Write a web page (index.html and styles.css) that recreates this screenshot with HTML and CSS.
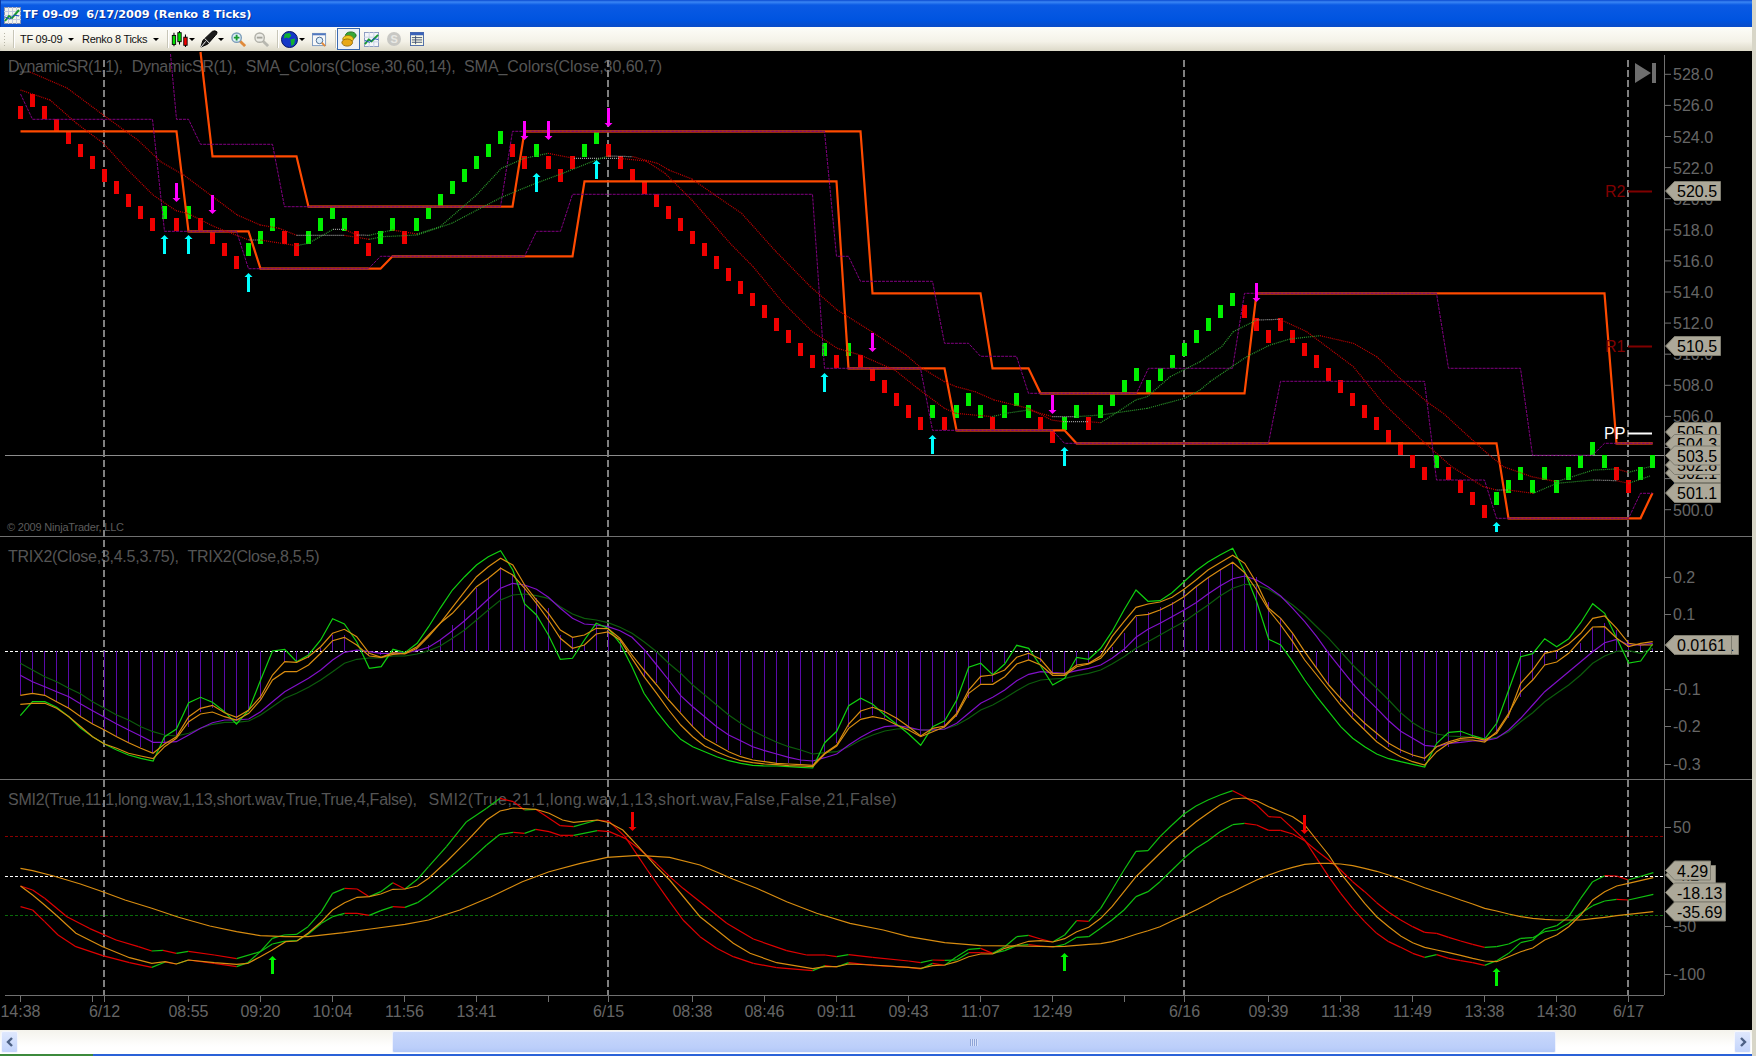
FILE: index.html
```html
<!DOCTYPE html>
<html lang="en">
<head>
    <meta charset="UTF-8">
    <title>TF 09-09 6/17/2009 (Renko 8 Ticks)</title>
    <link rel="stylesheet" href="styles.css">
</head>
<body>
    <div class="window">
        <div class="title-bar">
            <svg class="title-icon" width="17" height="17" viewBox="0 0 17 17">
                <rect x="0.5" y="0.5" width="16" height="16" fill="#f4f4ec" stroke="#8a93b0"/>
                <path d="M0 4.5H17M0 8.5H17M0 12.5H17M4.5 0V17M8.5 0V17M12.5 0V17" stroke="#c4cce0"/>
                <path d="M1 14L5 9L8 11L15 3" fill="none" stroke="#1a9a30" stroke-width="2"/>
                <path d="M1 10L6 12L10 8L15 9" fill="none" stroke="#2050c0"/>
            </svg>
            <span class="title-text">TF 09-09&nbsp; 6/17/2009 (Renko 8 Ticks)</span>
        </div>

        <div class="toolbar">
            <span class="grip"></span>
            <span class="sep"></span>
            <span class="tool-label first">TF 09-09</span>
            <span class="caret"></span>
            <span class="tool-label second">Renko 8 Ticks</span>
            <span class="caret"></span>
            <span class="sep"></span>
            <svg class="tool-icon candles" width="17" height="18" viewBox="0 0 20 20" preserveAspectRatio="none">
                <path d="M3.5 3V18M10 1V16M17 5V19" stroke="#000" stroke-width="1.2"/>
                <rect x="1.5" y="6" width="4" height="10" fill="#00e000" stroke="#000"/>
                <rect x="8" y="3" width="4" height="10" fill="#00e000" stroke="#000"/>
                <rect x="15" y="8" width="4" height="9" fill="#f00000" stroke="#000"/>
            </svg>
            <span class="caret small"></span>
            <svg class="tool-icon pen" width="18" height="18" viewBox="0 0 19 19">
                <path d="M1 18L3 11L13 1.5Q16 0 18 2Q18 5 16 6L8 15Z" fill="#1c1c1c" stroke="#000"/>
                <path d="M1 18L6 12M5 9L10 14" stroke="#fff"/>
            </svg>
            <span class="caret small pen-caret"></span>
            <svg class="tool-icon zoom-in" width="15" height="15" viewBox="0 0 16 16">
                <path d="M9.5 9.5L15 15" stroke="#e08a3a" stroke-width="3"/>
                <circle cx="6" cy="6" r="5" fill="#dff0f8" stroke="#7a9cb8" stroke-width="1.5"/>
                <path d="M3 6H9M6 3V9" stroke="#1a9a30" stroke-width="2"/>
            </svg>
            <svg class="tool-icon zoom-out" width="15" height="15" viewBox="0 0 16 16">
                <path d="M9.5 9.5L15 15" stroke="#b8b8b0" stroke-width="3"/>
                <circle cx="6" cy="6" r="5" fill="#ecece6" stroke="#b0b0a8" stroke-width="1.5"/>
                <path d="M3 6H9" stroke="#a4a49c" stroke-width="2"/>
            </svg>
            <span class="sep"></span>
            <svg class="tool-icon globe" width="17" height="17" viewBox="0 0 18 18">
                <circle cx="9" cy="9" r="8.5" fill="#1438c8" stroke="#001060"/>
                <path d="M4 3L9 2L11 5L8 8L6 7L3 8ZM10 9L15 8L14 14L11 16Z" fill="#10b030"/>
            </svg>
            <span class="caret small"></span>
            <svg class="tool-icon props" width="15" height="15" viewBox="0 0 16 16">
                <rect x="0.5" y="1.5" width="14" height="13" fill="#f8f8f8" stroke="#7a98c0"/>
                <rect x="0.5" y="1.5" width="14" height="2" fill="#5078c0"/>
                <circle cx="8" cy="9" r="3.5" fill="#dceefa" stroke="#4a6a90"/>
                <path d="M10.5 11.5L14 15" stroke="#e08a3a" stroke-width="2"/>
            </svg>
            <span class="sep"></span>
            <span class="tool-pressed">
                <svg width="16" height="16" viewBox="0 0 18 18">
                    <ellipse cx="11" cy="5" rx="6" ry="4" fill="#38a838" stroke="#1a6a1a"/>
                    <ellipse cx="8" cy="9" rx="6" ry="4" fill="#f0c820" stroke="#a07810"/>
                    <ellipse cx="7" cy="13" rx="6" ry="4" fill="#e8a818" stroke="#906808"/>
                </svg>
            </span>
            <svg class="tool-icon chart-btn" width="15" height="15" viewBox="0 0 16 16">
                <rect x="0.5" y="0.5" width="15" height="15" fill="#f4f6fa" stroke="#8a9ac0"/>
                <path d="M0 5.5H16M0 10.5H16M5.5 0V16M10.5 0V16" stroke="#c8d0e4"/>
                <path d="M1 13L5 8L8 10L15 3" fill="none" stroke="#1a9a30" stroke-width="2"/>
                <path d="M1 9L6 11L10 7L15 8" fill="none" stroke="#2050c0"/>
            </svg>
            <span class="coin">S</span>
            <svg class="tool-icon table-btn" width="14" height="14" viewBox="0 0 15 15">
                <rect x="0.5" y="0.5" width="14" height="14" fill="#fafae8" stroke="#4a6aa8"/>
                <rect x="0.5" y="0.5" width="14" height="3" fill="#3a62b8"/>
                <path d="M2 6H13M2 8.5H13M2 11H13M6 4V13" stroke="#405070"/>
            </svg>
        </div>

        <div class="chart-area">
            <svg id="chart" class="chart" width="1752" height="979" viewBox="0 51 1752 979">
                <text class="legend" x="8" y="72" textLength="115">DynamicSR(1,1),</text>
                <text class="legend" x="131.7" y="72" textLength="105">DynamicSR(1),</text>
                <text class="legend" x="245.7" y="72" textLength="210">SMA_Colors(Close,30,60,14),</text>
                <text class="legend" x="464" y="72" textLength="198">SMA_Colors(Close,30,60,7)</text>
                <text class="legend" x="8" y="562" textLength="171">TRIX2(Close,3,4.5,3.75),</text>
                <text class="legend" x="187.5" y="562" textLength="132">TRIX2(Close,8,5,5)</text>
                <text class="legend" x="8" y="805" textLength="409">SMI2(True,11,1,long.wav,1,13,short.wav,True,True,4,False),</text>
                <text class="legend" x="428.6" y="805" textLength="468">SMI2(True,21,1,long.wav,1,13,short.wav,False,False,21,False)</text>
                <text class="copyright" x="7" y="531" textLength="117">© 2009 NinjaTrader, LLC</text>
                <g id="layers"></g>
                <text class="level r-level" x="1605" y="197">R2</text>
                <text class="level r-level" x="1605" y="352">R1</text>
                <text class="level pp-level" x="1604" y="439">PP</text>
                <path class="end-icon" d="M1635 63V83L1651 73ZM1652 63H1656V83H1652Z"/>
            </svg>
        </div>

        <div class="scroll-bar">
            <span class="scroll-btn">
                <svg width="8" height="10" viewBox="0 0 8 10"><path d="M6 1L2 5L6 9" fill="none" stroke="#4d6185" stroke-width="2.4"/></svg>
            </span>
            <div class="scroll-track">
                <div class="scroll-thumb"><span class="thumb-grip"></span></div>
            </div>
            <span class="scroll-btn">
                <svg width="8" height="10" viewBox="0 0 8 10"><path d="M2 1L6 5L2 9" fill="none" stroke="#4d6185" stroke-width="2.4"/></svg>
            </span>
        </div>
        <div class="bottom-edge"><span class="start-strip"></span></div>
    </div>
    <script src="chart.js"></script>
</body>
</html>
```

FILE: styles.css
```css
html, body {
    margin: 0;
    height: 100%;
    overflow: hidden;
    background-color: #d8d6c8;
}

.window {
    display: flex;
    flex-direction: column;
    width: 1752px;
    height: 1056px;
    font-family: "Liberation Sans", Arial, sans-serif;
}

.title-bar {
    display: flex;
    align-items: center;
    gap: 2px;
    height: 27px;
    padding: 2px 0 0 3px;
    box-sizing: border-box;
    background: linear-gradient(#0a4ad0 0, #3a86f4 2px, #0a5ae4 5px, #0054e0 20px, #0a4cc8 27px);
    border-left: 1px solid #0838a8;
}

.title-icon {
    margin-top: 1px;
}

.title-text {
    color: #fff;
    font-family: "DejaVu Sans", sans-serif;
    font-size: 11.3px;
    font-weight: bold;
    white-space: nowrap;
    text-shadow: 1px 1px 0 #0a2e90;
}

.toolbar {
    display: flex;
    align-items: center;
    height: 24px;
    padding-left: 3px;
    box-sizing: border-box;
    background: linear-gradient(#fdfdf8, #f4f2e8 60%, #dcd9c8);
    border-bottom-left-radius: 4px;
    font-size: 11px;
    letter-spacing: -0.3px;
    color: #111;
}

.grip {
    width: 3px;
    height: 14px;
    margin-right: 7px;
    background-image: radial-gradient(#b8b6a8 1px, transparent 1px);
    background-size: 3px 3px;
}

.sep {
    flex: none;
    width: 1px;
    height: 18px;
    background-color: #c8c6b8;
    box-shadow: 1px 0 0 #fff;
}

.tool-label {
    white-space: nowrap;
}

.tool-label.first {
    width: 42px;
    margin-left: 6px;
}

.tool-label.second {
    width: 65px;
}

.caret {
    flex: none;
    width: 0;
    height: 0;
    margin: 0 8px 0 6px;
    border-left: 3px solid transparent;
    border-right: 3px solid transparent;
    border-top: 3px solid #000;
}

.caret.small {
    margin: 0 0 0 1px;
}

.caret.pen-caret {
    margin-left: 0;
}

.tool-icon {
    flex: none;
}

.tool-icon.candles {
    margin-left: 3px;
}

.tool-icon.pen {
    margin-left: 5px;
}

.tool-icon.zoom-in {
    margin-left: 7px;
}

.tool-icon.zoom-out {
    margin: 0 8px;
}

.tool-icon.globe {
    margin-left: 3px;
}

.tool-icon.props {
    margin: 0 8px 0 7px;
}

.tool-pressed {
    flex: none;
    display: flex;
    align-items: center;
    justify-content: center;
    width: 23px;
    height: 22px;
    margin: 0 4px 0 1px;
    box-sizing: border-box;
    background-color: #eef1f6;
    border: 1px solid #3a6ab0;
}

.coin {
    flex: none;
    display: flex;
    align-items: center;
    justify-content: center;
    width: 14px;
    height: 14px;
    margin: 0 9px 0 8px;
    border-radius: 50%;
    background-color: #c8c8c4;
    color: #e8e8e4;
    font-size: 11px;
    font-weight: bold;
}

.chart-area {
    flex: none;
    height: 979px;
    background-color: #000;
}

.chart {
    display: block;
    font-family: "Liberation Sans", Arial, sans-serif;
}

.legend {
    font-size: 16px;
    fill: #555;
}

.copyright {
    font-size: 11px;
    fill: #5c5c5c;
}

.axis-line {
    stroke: #707070;
    stroke-width: 1;
    fill: none;
}

.price-line {
    stroke: #8c8c8c;
}

.axis-label {
    font-size: 16px;
    fill: #666;
}

.time-label {
    font-size: 16px;
    fill: #666;
    text-anchor: middle;
}

.session {
    stroke: #808080;
    stroke-width: 2;
    stroke-dasharray: 7 3;
}

.brick-up {
    fill: #00f000;
}

.brick-down {
    fill: #f00000;
}

.support {
    fill: none;
    stroke: #ff4a00;
    stroke-width: 2.2;
}

.shared {
    stroke: #a83816;
    stroke-width: 2.6;
}

.dynamic {
    fill: none;
    stroke: #800080;
    stroke-dasharray: 3 1;
}

.sma {
    stroke-width: 1.2;
    stroke-dasharray: 1 1;
}

.sma.fall {
    stroke: #c80000;
}

.sma.rise {
    stroke: #2c9c2c;
}

.sma.flat {
    stroke: #a0a0a0;
}

.zero-line {
    stroke: #fff;
    stroke-dasharray: 3 2;
}

.high-line {
    stroke: #8b0000;
    stroke-dasharray: 3 2;
}

.low-line {
    stroke: #0a6a0a;
    stroke-dasharray: 3 2;
}

.hist {
    stroke: #5a0aa8;
}

.trix {
    fill: none;
    stroke-width: 1.2;
}

.trix.fast {
    stroke: #10d010;
}

.trix.slow {
    stroke: #0c5c0c;
}

.trix.mid {
    stroke: #d88c10;
}

.trix.signal {
    stroke: #8010c8;
}

.smi-seg {
    stroke-width: 1.2;
}

.smi-seg.rise {
    stroke: #10c010;
}

.smi-seg.fall {
    stroke: #e00000;
}

.smi-orange {
    fill: none;
    stroke: #d88c10;
    stroke-width: 1.2;
}

.arrow-sell {
    fill: #ff00ff;
}

.arrow-buy {
    fill: #00ffff;
}

.arrow-green {
    fill: #00f000;
}

.arrow-red {
    fill: #f00000;
}

.level {
    font-size: 16px;
}

.r-level {
    fill: #800000;
}

.pp-level {
    fill: #fff;
}

.level-tick {
    stroke-width: 2;
}

.level-tick.r {
    stroke: #800000;
}

.level-tick.pp {
    stroke: #fff;
}

.marker {
    fill: #aca899;
    stroke: #7f7d70;
}

.marker-text {
    font-size: 16px;
    fill: #000;
}

.end-icon {
    fill: #6e6e6e;
}

.scroll-bar {
    display: flex;
    align-items: center;
    height: 24px;
    padding: 0 1px;
    box-sizing: border-box;
    background: linear-gradient(#f4f3ec, #fff 70%);
}

.scroll-btn {
    display: flex;
    align-items: center;
    justify-content: center;
    width: 15px;
    height: 20px;
    background: linear-gradient(#dfe8fd, #c3d4fb);
    border: 1px solid #f4f6fd;
    border-radius: 2px;
}

.scroll-track {
    flex: 1;
    display: flex;
    height: 22px;
    padding-left: 374px;
    padding-right: 178px;
}

.scroll-thumb {
    flex: 1;
    display: flex;
    align-items: center;
    justify-content: center;
    background: linear-gradient(#c9d8fb, #bbcefa 80%, #b0c6f6);
    border: 1px solid #eef2fd;
    border-radius: 2px;
}

.thumb-grip {
    width: 8px;
    height: 7px;
    background-image: repeating-linear-gradient(90deg, #8ea4d8 0, #8ea4d8 1px, #d8e2fb 1px, #d8e2fb 2px);
}

.bottom-edge {
    display: flex;
    flex: 1;
    background-color: #2a62d8;
}

.start-strip {
    width: 93px;
    background-color: #3c8a3c;
}
```

FILE: chart.js
```js
// each crop helper turns points read off a traced crop into page pixels
const crop = (ox, oy, sx) => pts => pts.map(([x, y]) => [ox + x / sx, oy + y / 3]);
const top2 = crop(0, 80, 2.613);
const top8 = crop(600, 80, 2.613);
const top9 = crop(1150, 270, 3);
const mid7 = crop(0, 520, 2.613);
const low10 = crop(0, 780, 2.24);
const pane11 = crop(600, 530, 3);
const pane12 = crop(1100, 530, 3);
const pane5 = crop(1450, 780, 3);

const barX = i => 20.5 + 12 * i;

const layers = document.getElementById("layers");

function add(tag, attrs, text) {
    const el = document.createElementNS("http://www.w3.org/2000/svg", tag);
    for (const key in attrs) el.setAttribute(key, attrs[key]);
    if (text !== undefined) el.textContent = text;
    layers.appendChild(el);
    return el;
}

function line(x1, y1, x2, y2, cls) {
    return add("line", { x1, y1, x2, y2, class: cls });
}

function poly(pts, cls) {
    return add("polyline", { points: pts.map(p => p[0].toFixed(1) + "," + p[1].toFixed(1)).join(" "), class: cls });
}

// bricks: level 0 has its top at y=94
const levels = [
    1,0,1,2,3,4,5,6,7,8,9,10,9,10,9,10,11,12,13,12,11,10,11,12,11,10,9,10,11,12,11,10,11,10,9,8,7,6,5,4,3,4,5,4,5,6,5,4,3,
    4,5,6,7,8,9,10,11,12,13,14,15,16,17,18,19,20,21,20,21,20,21,22,23,24,25,26,25,26,25,24,25,26,25,24,25,26,27,26,25,26,25,24,23,22,23,22,21,20,19,
    18,17,16,17,18,19,18,19,20,21,22,23,24,25,26,27,28,29,30,29,30,31,32,33,32,31,30,31,30,31,30,29,28,29,30,31,30,29
];
const greens = new Set([
    12,14,19,20,21,24,25,26,27,30,31,33,34,35,36,37,38,39,40,43,47,48,
    67,69,76,78,79,80,82,83,84,87,88,90,91,92,93,94,95,96,97,98,99,100,101,
    118,123,124,125,126,127,128,129,130,131,132,135,136
]);

// series of vertices as [bar, y]
const supportA = [[0,131.3],[13,131.3],[14,231.3],[19,231.3],[20,268.7],[30,268.7],[31,256.3],[46,256.3],[47,181.3],[68,181.3],[69,368.3],[77,368.3],[78,430.3],[87,430.3],[88,443.3],[123,443.3],[124,518.3],[135,518.3],[136,493]];
const supportB = [[15,52],[16,156.3],[23,156.3],[24,206.7],[41,206.7],[42,131.3],[70,131.3],[71,293.3],[80,293.3],[81,368.3],[84,368.3],[85,393.3],[102,393.3],[103,293.3],[132,293.3],[133,443.3],[136,443.3]];
const dynamicA = [[0,94],[1,119.3],[11,119.3],[12,231.3],[18,231.3],[19,268.7],[29,268.7],[30,256.3],[42,256.3],[43,231.3],[45,231.3],[46,194.3],[66,194.3],[67,368.3],[75,368.3],[76,430.3],[86,430.3],[87,443.3],[104,443.3],[105,381.3],[117,381.3],[118,480],[122,480],[123,518.3],[134,518.3],[135,493.3],[136,493.3]];
const dynamicB = [[12.5,54],[13,119.3],[14,119.3],[15,144.3],[21,144.3],[22,206.7],[40,206.7],[41,131.3],[67,131.3],[68,256.3],[69,256.3],[70,281.3],[76,281.3],[77,343.3],[79,343.3],[80,356.3],[83,356.3],[84,393.3],[93,393.3],[94,368.3],[101,368.3],[102,293.3],[118,293.3],[119,368.3],[125,368.3],[126,455.3],[131,455.3],[132,443.3],[136,443.3]];
// stretches where the dashed and the solid levels lie on each other
const shared = [[42,67,131.3],[14,18,231.3],[24,40,206.7],[20,29,268.7],[31,42,256.3],[69,75,368.3],[78,86,430.3],[88,104,443.3],[85,93,393.3],[103,118,293.3],[133,136,443.3],[124,134,518.3]];

const smaA = [[20.5,90],[50,100]].concat(
    top2([[200,130],[270,190],[330,265],[400,345],[460,392],[490,400],[560,440],[650,480],[680,480],[775,497],[806,490],[870,448],[900,448],[932,465],[965,466],[1025,450],[1090,462],[1150,440],[1245,345],[1310,265],[1370,235],[1432,220],[1500,235]]),
    top8([[50,235],[120,243],[170,280],[240,360],[340,490],[400,560],[480,670],[555,755],[620,805],[680,825],[770,870],[830,925],[900,985],[930,1000],[1025,1010],[1060,1000],[1120,990],[1182,1010],[1245,1010],[1308,1005],[1430,985],[1527,955],[1568,930]]),
    top9([[180,335],[290,260],[360,225],[420,207],[510,197],[610,220],[680,260],[750,325],[830,395],[880,430],[1000,540],[1060,590],[1145,620],[1220,635],[1330,600],[1400,597],[1435,607],[1500,590]])
);
const smaB = [[20.5,72],[30,72],[67,88]].concat(
    top2([[270,105],[360,180],[420,245],[480,285],[550,345],[620,405],[680,435],[730,445],[775,466],[900,466],[965,478],[1000,470],[1090,465],[1180,430],[1310,352],[1400,310],[1470,280],[1558,240]]),
    top8([[22,228],[85,230],[150,250],[180,270],[240,297],[300,345],[370,400],[460,515],[550,620],[620,690],[710,755],[800,825],[835,860],[900,905],[930,920],[980,935],[1030,960],[1120,985],[1180,1020],[1210,1025],[1276,1025],[1308,1028],[1340,1005],[1400,960],[1430,950],[1490,890],[1568,845]]),
    top9([[215,230],[250,185],[320,150],[390,148],[470,185],[610,290],[700,400],[820,515],[905,590],[1000,650],[1040,660],[1075,660],[1150,670],[1220,640],[1330,630],[1400,632],[1435,640],[1500,618]])
);

// histogram tips, one per bar
const hist = [
    695,694,695,702,708,717,724,730,737,743,747,753,742,737,727,712,708,712,720,712,700,652,662,662,658,648,635,635,650,655,655,651,
    651,648,645,640,625,610,588,578,567,575,585,598,608,635,637,645,625,
    627,640,651,677,683,698,712,727,737,743,750,755,758,762,763,763,764,766,753,743,727,718,715,718,725,730,735,730,728,717,698,685,682,663,651,660,662,673,675,665,663,653,
    647,633,617,612,607,602,593,587,578,570,563,570,577,602,618,633,651,668,685,702,717,729,739,747,753,757,761,743,747,739,737,742,733,718,697,680,665,659,651,643,627,623,630,640,645,648
];

const trixFast = mid7([[53,587],[85,545],[117,545],[148,562],[180,590],[211,625],[242,650],[273,672],[305,690],[336,705],[368,715],[400,723],[430,650],[461,627],[493,548],[524,532],[555,547],[587,575],[618,612],[650,570],[681,480],[712,393],[744,388],[775,425],[806,405],[838,360],[869,296],[900,312],[932,365],[965,445],[996,440],[1027,388],[1058,398],[1090,370],[1120,320],[1150,265],[1182,210],[1214,170],[1245,135],[1276,110],[1308,92],[1340,150],[1371,252],[1402,285],[1433,345],[1464,418],[1496,415],[1527,360],[1558,310]]).concat(
    pane11([[24,295],[60,340],[96,410],[132,490],[170,545],[206,590],[242,628],[278,650],[314,665],[350,680],[386,692],[422,700],[458,706],[494,708],[530,708],[566,710],[602,712],[638,714],[674,638],[710,604],[746,527],[782,505],[818,523],[854,555],[890,583],[926,612],[962,646],[998,590],[1034,572],[1070,510],[1106,412],[1142,400],[1178,434],[1214,402],[1250,346],[1286,355],[1322,408],[1358,465],[1394,445],[1430,382],[1466,388],[1502,355]]),
    pane12([[36,305],[72,240],[108,180],[144,214],[180,212],[216,188],[252,155],[288,122],[324,96],[360,75],[398,55],[434,125],[470,215],[506,328],[542,345],[578,395],[614,450],[650,500],[686,545],[722,590],[758,625],[794,650],[830,672],[866,686],[902,695],[938,703],[974,711],[1010,640],[1046,607],[1082,604],[1118,617],[1154,627],[1190,580],[1226,480],[1262,380],[1298,371],[1334,326],[1370,350],[1406,326],[1442,278],[1478,221],[1514,250],[1550,325],[1586,399],[1622,393],[1658,342]])
);
const trixUpper = mid7([[53,526],[85,520],[117,526],[148,545],[180,565],[211,590],[242,612],[273,630],[305,650],[336,668],[368,685],[400,700],[430,672],[461,650],[493,590],[524,565],[555,556],[587,578],[618,592],[650,570],[681,530],[712,465],[744,425],[775,427],[806,410],[838,380],[869,340],[900,328],[932,350],[965,400],[996,412],[1027,398],[1058,402],[1090,385],[1120,350],[1150,310],[1182,262],[1214,215],[1245,170],[1276,140],[1308,115],[1340,135],[1371,195],[1402,240],[1433,280],[1464,330],[1496,352],[1527,345],[1558,325]]).concat(
    pane11([[24,296],[60,325],[96,375],[132,420],[170,465],[206,510],[242,550],[278,590],[314,625],[350,645],[386,665],[422,680],[458,690],[494,695],[530,700],[566,702],[602,704],[638,706],[674,670],[710,645],[746,582],[782,543],[818,532],[854,545],[890,565],[926,590],[962,618],[998,595],[1034,588],[1070,550],[1106,480],[1142,439],[1178,435],[1214,420],[1250,382],[1286,370],[1322,388],[1358,430],[1394,432],[1430,405],[1466,400],[1502,378]]),
    pane12([[36,320],[72,275],[108,232],[144,222],[180,216],[216,202],[252,178],[288,150],[324,120],[360,98],[398,76],[434,100],[470,160],[506,235],[542,265],[578,310],[614,365],[650,415],[686,465],[722,505],[758,545],[794,580],[830,610],[866,640],[902,660],[938,675],[974,685],[1010,650],[1046,635],[1082,625],[1118,622],[1154,630],[1190,610],[1226,555],[1262,460],[1298,420],[1334,370],[1370,362],[1406,342],[1442,310],[1478,265],[1514,258],[1550,295],[1586,340],[1622,345],[1658,345]])
);
const trixLower = mid7([[53,553],[85,550],[117,550],[148,565],[180,590],[211,620],[242,650],[273,672],[305,685],[336,700],[368,708],[400,716],[430,680],[461,655],[493,605],[524,582],[555,576],[587,590],[618,600],[650,580],[681,540],[712,480],[744,455],[775,455],[806,435],[838,400],[869,362],[900,352],[932,375],[965,408],[996,412],[1027,403],[1058,400],[1090,380],[1120,345],[1150,310],[1182,280],[1214,240],[1245,200],[1276,175],[1308,145],[1340,165],[1371,205],[1402,250],[1433,300],[1464,355],[1496,385],[1527,375],[1558,342]]).concat(
    pane11([[24,306],[60,330],[96,385],[132,440],[170,490],[206,540],[242,585],[278,620],[314,648],[350,665],[386,680],[422,692],[458,698],[494,702],[530,704],[566,707],[602,708],[638,710],[674,672],[710,648],[746,595],[782,568],[818,560],[854,567],[890,585],[926,600],[962,620],[998,605],[1034,590],[1070,555],[1106,490],[1142,463],[1178,463],[1214,440],[1250,402],[1286,390],[1322,405],[1358,436],[1394,436],[1430,410],[1466,402],[1502,385]]),
    pane12([[36,345],[72,300],[108,257],[144,253],[180,240],[216,222],[252,200],[288,170],[324,143],[360,120],[398,97],[434,128],[470,180],[506,240],[542,285],[578,335],[614,390],[650,435],[686,480],[722,525],[758,565],[794,600],[830,635],[866,660],[902,680],[938,695],[974,705],[1010,665],[1046,640],[1082,630],[1118,630],[1154,636],[1190,605],[1226,550],[1262,485],[1298,450],[1334,405],[1370,396],[1406,370],[1442,330],[1478,291],[1514,290],[1550,325],[1586,350],[1622,340],[1658,335]])
);
const trixSignal = mid7([[53,466],[85,485],[117,500],[148,515],[180,530],[211,552],[242,572],[273,592],[305,612],[336,630],[368,648],[400,667],[430,667],[461,665],[493,645],[524,625],[555,608],[587,600],[618,600],[650,597],[681,575],[712,545],[744,515],[775,495],[806,475],[838,450],[869,420],[900,397],[932,390],[965,395],[996,400],[1027,400],[1058,398],[1090,392],[1120,382],[1150,360],[1182,332],[1214,302],[1245,270],[1276,237],[1308,205],[1340,190],[1371,195],[1402,208],[1433,232],[1464,265],[1496,295],[1527,312],[1558,315]]).concat(
    pane11([[24,290],[60,302],[96,322],[132,358],[170,405],[206,450],[242,497],[278,530],[314,560],[350,590],[386,615],[422,632],[458,650],[494,662],[530,672],[566,682],[602,690],[638,693],[674,683],[710,672],[746,645],[782,622],[818,602],[854,590],[890,587],[926,592],[962,600],[998,600],[1034,597],[1070,580],[1106,550],[1142,520],[1178,502],[1214,480],[1250,452],[1286,433],[1322,425],[1358,428],[1394,430],[1430,422],[1466,415],[1502,405]]),
    pane12([[36,385],[72,358],[108,322],[144,298],[180,280],[216,260],[252,240],[288,218],[324,192],[360,168],[398,146],[434,138],[470,150],[506,172],[542,198],[578,235],[614,275],[650,320],[686,370],[722,415],[758,460],[794,500],[830,535],[866,572],[902,604],[938,625],[974,646],[1010,650],[1046,640],[1082,637],[1118,633],[1154,632],[1190,625],[1226,600],[1262,565],[1298,525],[1334,485],[1370,455],[1406,425],[1442,395],[1478,365],[1514,338],[1550,328],[1586,345],[1622,345],[1658,340]])
);
const trixSlow = mid7([[53,430],[85,450],[117,470],[148,485],[180,505],[211,522],[242,545],[273,565],[305,585],[336,600],[368,620],[400,635],[430,645],[461,648],[493,640],[524,625],[555,613],[587,607],[618,607],[650,603],[681,585],[712,560],[744,535],[775,520],[806,502],[838,480],[869,455],[900,430],[932,418],[965,414],[996,414],[1027,408],[1058,408],[1090,402],[1120,392],[1150,378],[1182,355],[1214,330],[1245,300],[1276,270],[1308,240],[1340,225],[1371,222],[1402,227],[1433,235],[1464,260],[1496,282],[1527,295],[1558,300]]).concat(
    pane11([[24,278],[60,292],[96,310],[132,335],[170,365],[206,400],[242,430],[278,465],[314,495],[350,525],[386,555],[422,580],[458,602],[494,620],[530,637],[566,650],[602,660],[638,672],[674,668],[710,665],[746,650],[782,630],[818,615],[854,603],[890,597],[926,595],[962,600],[998,600],[1034,597],[1070,585],[1106,565],[1142,540],[1178,525],[1214,505],[1250,482],[1286,462],[1322,450],[1358,447],[1394,445],[1430,437],[1466,430],[1502,420]]),
    pane12([[36,402],[72,380],[108,355],[144,335],[180,315],[216,295],[252,275],[288,250],[324,225],[360,198],[398,175],[434,163],[470,165],[506,178],[542,200],[578,225],[614,255],[650,290],[686,325],[722,365],[758,405],[794,440],[830,475],[866,510],[902,548],[938,578],[974,600],[1010,612],[1046,618],[1082,620],[1118,622],[1154,628],[1190,622],[1226,605],[1262,575],[1298,548],[1334,515],[1370,490],[1406,465],[1442,435],[1478,400],[1514,378],[1550,364],[1586,362],[1622,370],[1658,355]])
);

const smiFast = low10([[46,380],[73,390],[100,425],[130,465],[170,500],[230,527],[290,548],[340,562],[370,546],[395,552],[422,540],[480,550],[530,560],[555,548],[583,515],[610,475],[636,465],[665,463],[690,440],[720,395],[745,340],[772,325],[800,327],[827,350],[853,335],[880,308],[907,327],[935,298],[960,260],[1000,200],[1045,125],[1090,85],[1120,55],[1150,65],[1175,90],[1200,88],[1230,115],[1255,137],[1285,140],[1338,120],[1365,125],[1400,170],[1450,270],[1500,365],[1530,420],[1568,470]]).concat(
    pane11([[350,1255],[400,1280],[460,1300],[530,1313],[638,1322],[675,1307],[710,1311],[746,1298],[818,1306],[926,1312],[962,1317],[998,1300],[1034,1306],[1070,1280],[1106,1258],[1142,1255],[1178,1270],[1214,1250],[1250,1220],[1286,1216],[1322,1227],[1358,1236],[1394,1215],[1430,1172],[1466,1174],[1502,1135]]),
    pane12([[36,1080],[72,1020],[108,964],[144,962],[180,920],[216,885],[252,852],[288,828],[324,810],[360,795],[398,782],[434,800],[470,825],[506,860],[542,862],[578,895],[614,930],[650,985],[686,1040],[722,1090],[758,1135],[794,1175],[830,1210],[866,1235],[902,1252],[938,1270],[974,1282],[1010,1274],[1046,1285],[1082,1292],[1118,1298],[1154,1306],[1190,1292],[1226,1270],[1262,1238],[1298,1230],[1334,1197],[1370,1187],[1406,1160],[1442,1105],[1478,1055],[1514,1037],[1550,1038]]),
    pane5([[535,300],[610,278]])
);
const smiSlow = low10([[46,318],[73,330],[100,355],[150,410],[200,445],[260,480],[310,500],[340,513],[365,511],[395,520],[422,514],[480,525],[530,536],[583,515],[610,492],[636,484],[665,482],[690,463],[720,430],[745,410],[772,400],[800,400],[827,406],[853,392],[880,380],[907,382],[935,368],[960,345],[1000,300],[1045,250],[1090,195],[1120,163],[1150,157],[1175,160],[1200,148],[1230,155],[1255,166],[1285,166],[1338,152],[1365,155],[1400,175],[1430,205],[1470,250],[1500,290],[1530,325],[1568,365]]).concat(
    pane11([[380,1180],[460,1227],[560,1262],[620,1275],[675,1275],[710,1280],[746,1274],[818,1282],[926,1293],[962,1298],[998,1290],[1034,1291],[1070,1290],[1106,1268],[1142,1268],[1178,1270],[1214,1262],[1250,1247],[1286,1244],[1322,1248],[1358,1251],[1394,1243],[1430,1222],[1466,1220],[1502,1195]]),
    pane12([[36,1170],[72,1140],[108,1100],[144,1085],[180,1055],[216,1020],[252,985],[288,955],[324,932],[360,905],[398,884],[434,880],[470,885],[506,901],[542,901],[578,912],[614,932],[650,962],[686,990],[722,1020],[758,1055],[794,1085],[830,1118],[866,1147],[902,1170],[938,1190],[974,1207],[1010,1210],[1046,1222],[1082,1233],[1118,1243],[1154,1252],[1190,1250],[1226,1242],[1262,1225],[1298,1223],[1334,1205],[1370,1200],[1406,1180],[1442,1150],[1478,1127],[1514,1113],[1550,1108]]),
    pane5([[535,360],[610,343]])
);
const smiMid = low10([[46,318],[73,345],[100,375],[130,410],[170,460],[230,500],[290,533],[340,550],[370,545],[395,552],[422,540],[480,548],[530,553],[555,550],[583,530],[610,510],[640,485],[665,483],[690,460],[720,425],[745,390],[772,368],[800,352],[827,350],[853,342],[880,328],[907,327],[935,318],[960,295],[1000,245],[1045,185],[1090,120],[1120,93],[1150,84],[1200,88],[1230,100],[1260,120],[1285,127],[1338,120],[1365,128],[1395,150],[1430,200],[1470,260],[1500,300],[1568,410]]).concat(
    pane11([[350,1200],[400,1240],[450,1270],[530,1298],[638,1316],[675,1310],[710,1310],[746,1302],[818,1305],[926,1312],[962,1315],[998,1307],[1034,1305],[1070,1295],[1106,1280],[1142,1272],[1178,1272],[1214,1255],[1250,1245],[1286,1234],[1322,1232],[1358,1236],[1394,1226],[1430,1205],[1466,1192],[1502,1165]]),
    pane12([[36,1130],[72,1085],[108,1040],[144,1005],[180,970],[216,935],[252,905],[288,875],[324,850],[360,825],[398,807],[434,804],[470,812],[506,830],[542,845],[578,860],[614,885],[650,930],[686,975],[722,1030],[758,1075],[794,1120],[830,1160],[866,1190],[902,1218],[938,1238],[974,1252],[1010,1260],[1046,1268],[1082,1276],[1118,1285],[1154,1293],[1190,1295],[1226,1280],[1262,1265],[1298,1254],[1334,1230],[1370,1215],[1406,1190],[1442,1155],[1478,1110],[1514,1085],[1550,1068]]),
    pane5([[535,310],[610,293]])
);
const smiLong = low10([[46,265],[73,272],[120,288],[180,312],[230,335],[280,360],[340,385],[400,412],[470,438],[530,455],[583,467],[640,470],[690,470],[770,458],[830,447],[907,433],[960,420],[1030,390],[1100,350],[1170,305],[1230,275],[1300,250],[1360,232],[1430,226],[1500,232],[1568,255]]).concat(
    pane11([[350,1026],[400,1048],[470,1075],[560,1115],[650,1150],[750,1180],[850,1200],[926,1220],[1034,1238],[1142,1247],[1250,1248],[1358,1250],[1394,1249],[1466,1243],[1502,1241]]),
    pane12([[36,1235],[72,1225],[108,1213],[144,1202],[180,1190],[216,1173],[252,1157],[288,1140],[324,1122],[360,1102],[398,1085],[434,1067],[470,1050],[506,1035],[542,1022],[578,1012],[614,1003],[650,1000],[686,1000],[722,1002],[758,1007],[794,1015],[830,1024],[866,1035],[902,1047],[938,1060],[974,1073],[1010,1085],[1046,1097],[1082,1110],[1118,1122],[1154,1135],[1190,1143],[1226,1152],[1262,1160],[1298,1165],[1334,1168],[1370,1170],[1406,1170],[1442,1170],[1478,1166],[1514,1162],[1550,1157]]),
    pane5([[535,403],[610,395]])
);

// pane frames and guide lines
line(0, 536.5, 1752, 536.5, "axis-line");
line(0, 779.5, 1752, 779.5, "axis-line");
line(5, 995.5, 1664, 995.5, "axis-line");
line(1664.5, 55, 1664.5, 995, "axis-line");
line(5, 455.5, 1664, 455.5, "axis-line price-line");
line(5, 651.5, 1664, 651.5, "zero-line");
line(5, 836.5, 1664, 836.5, "high-line");
line(5, 876.5, 1664, 876.5, "zero-line");
line(5, 915.5, 1664, 915.5, "low-line");

// value axes
for (let p = 528; p >= 500; p -= 2) {
    const y = 74.3 + (528 - p) * 15.55;
    line(1664, y, 1671, y, "axis-line");
    add("text", { x: 1673, y: y + 6, class: "axis-label" }, p.toFixed(1));
}
[["0.2", 577], ["0.1", 614], ["-0.1", 689], ["-0.2", 726], ["-0.3", 764], ["50", 827], ["-50", 926], ["-100", 974]].forEach(([label, y]) => {
    line(1664, y + 0.5, 1671, y + 0.5, "axis-line");
    add("text", { x: 1673, y: y + 6, class: "axis-label" }, label);
});

// time axis
[["14:38", 20.5], ["", 92.5], ["6/12", 104.5], ["08:55", 188.5], ["09:20", 260.5], ["10:04", 332.5], ["11:56", 404.5], ["13:41", 476.5], ["", 548.5],
 ["6/15", 608.5], ["08:38", 692.5], ["08:46", 764.5], ["09:11", 836.5], ["09:43", 908.5], ["11:07", 980.5], ["12:49", 1052.5], ["", 1124.5],
 ["6/16", 1184.5], ["09:39", 1268.5], ["11:38", 1340.5], ["11:49", 1412.5], ["13:38", 1484.5], ["14:30", 1556.5], ["6/17", 1628.5]].forEach(([label, x]) => {
    line(x, 995, x, 1002, "axis-line");
    if (label) add("text", { x, y: 1017, class: "time-label" }, label);
});

// session breaks
[104, 608, 1184, 1628].forEach(x => line(x, 60, x, 995, "session"));

// price pane
levels.forEach((level, i) => {
    add("rect", {
        x: 18 + 12 * i, y: Math.round(94 + 12.44 * level), width: 5, height: 13,
        class: greens.has(i) ? "brick-up" : "brick-down"
    });
});

const asPoints = s => s.map(([i, y]) => [barX(i), y]);
poly(asPoints(supportA), "support");
poly(asPoints(supportB), "support");
shared.forEach(([a, b, y]) => line(barX(a), y, barX(b), y, "shared"));
poly(asPoints(dynamicA), "dynamic");
poly(asPoints(dynamicB), "dynamic");

function slopeSegments(pts, cls, flat) {
    for (let n = 1; n < pts.length; n++) {
        const [x1, y1] = pts[n - 1];
        const [x2, y2] = pts[n];
        let kind = y2 < y1 ? "rise" : "fall";
        if (flat && Math.abs(y2 - y1) / (x2 - x1) < 0.04) kind = "flat";
        line(x1, y1, x2, y2, cls + " " + kind);
    }
}
slopeSegments(smaA, "sma", true);
slopeSegments(smaB, "sma", true);

function arrow(i, top, height, dir, cls) {
    const x = barX(i);
    const tip = dir === "up" ? top : top + height;
    const neck = dir === "up" ? top + 4 : top + height - 4;
    const end = dir === "up" ? top + height : top;
    const d = `M${x},${tip} L${x + 4},${neck} H${x + 1.5} V${end} H${x - 1.5} V${neck} H${x - 4} Z`;
    add("path", { d, class: cls });
}
[[12, 235], [14, 235], [19, 273], [43, 173], [48, 160], [67, 373], [76, 435], [87, 447]].forEach(([i, y]) => arrow(i, y, 19, "up", "arrow-buy"));
arrow(123, 522, 10, "up", "arrow-buy");
[[13, 183], [16, 195], [42, 121], [44, 121], [49, 108], [71, 333], [86, 395], [103, 283]].forEach(([i, y]) => arrow(i, y, 19, "down", "arrow-sell"));

// level ticks next to the axis
line(1628, 191.5, 1652, 191.5, "level-tick r");
line(1628, 346.5, 1652, 346.5, "level-tick r");
line(1628, 433.5, 1652, 433.5, "level-tick pp");

// indicator panes
hist.forEach((tip, i) => line(barX(i), 651, barX(i), tip, "hist"));
poly(trixSlow, "trix slow");
poly(trixSignal, "trix signal");
poly(trixFast, "trix fast");
poly(trixLower, "trix mid");
poly(trixUpper, "trix mid");

slopeSegments(smiSlow, "smi-seg", false);
slopeSegments(smiFast, "smi-seg", false);
poly(smiLong, "smi-orange");
poly(smiMid, "smi-orange");
arrow(21, 956, 18, "up", "arrow-green");
arrow(87, 953, 18, "up", "arrow-green");
arrow(123, 968, 18, "up", "arrow-green");
arrow(51, 812, 19, "down", "arrow-red");
arrow(107, 815, 19, "down", "arrow-red");

// value tags on the axis, later ones cover earlier ones
function marker(label, cy, right) {
    const t = cy - 9.5, b = cy + 9.5;
    add("polygon", { points: `1665.5,${cy} 1674.5,${t} ${right},${t} ${right},${b} 1674.5,${b}`, class: "marker" });
    add("text", { x: 1677, y: cy + 6, class: "marker-text" }, label);
}
marker("520.5", 191, 1720.5);
marker("510.5", 346, 1720.5);
marker("505.0", 432, 1720.5);
marker("504.3", 444, 1720.5);
marker("502.1", 473, 1720.5);
marker("502.8", 465, 1720.5);
marker("503.5", 455.5, 1720.5);
marker("501.1", 493, 1720.5);
marker("0.01611", 645, 1738.5);
marker("0.0161", 645, 1731.5);
marker("4.2", 875, 1715.5);
marker("4.29", 870.5, 1710.5);
marker("-18.13", 892.5, 1725.5);
marker("-35.69", 911.5, 1725.5);
```
